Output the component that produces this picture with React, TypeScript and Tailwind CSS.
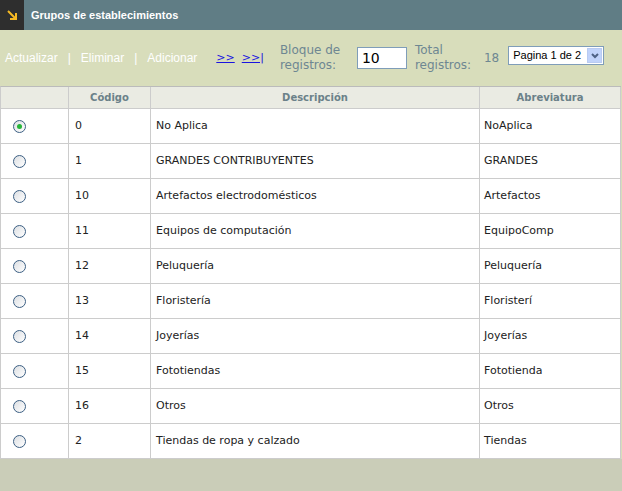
import React from "react";

type Row = { codigo: string; descripcion: string; abrev: string };

const rows: Row[] = [
  { codigo: "0", descripcion: "No Aplica", abrev: "NoAplica" },
  { codigo: "1", descripcion: "GRANDES CONTRIBUYENTES", abrev: "GRANDES" },
  { codigo: "10", descripcion: "Artefactos electrodomésticos", abrev: "Artefactos" },
  { codigo: "11", descripcion: "Equipos de computación", abrev: "EquipoComp" },
  { codigo: "12", descripcion: "Peluquería", abrev: "Peluquería" },
  { codigo: "13", descripcion: "Floristería", abrev: "Floristerí" },
  { codigo: "14", descripcion: "Joyerías", abrev: "Joyerías" },
  { codigo: "15", descripcion: "Fototiendas", abrev: "Fototienda" },
  { codigo: "16", descripcion: "Otros", abrev: "Otros" },
  { codigo: "2", descripcion: "Tiendas de ropa y calzado", abrev: "Tiendas" },
];

function Radio({ checked }: { checked?: boolean }) {
  return (
    <span className="w-[13px] h-[13px] rounded-full border border-[#3c5f83] bg-gradient-to-br from-[#dcdfe3] to-white flex items-center justify-center">
      {checked && <span className="w-[5px] h-[5px] rounded-full bg-[#26b53a]" />}
    </span>
  );
}

export default function App() {
  const cell = "border-r border-[#cccccc] px-[6px] flex items-center";
  return (
    <div className="w-[622px] h-[491px] bg-[#d8ddbb] flex flex-col text-[11px]" style={{ fontFamily: "'DejaVu Sans', Verdana, sans-serif" }}>
      <div className="h-[30px] bg-[#607d85] flex items-center shrink-0">
        <div className="w-[24px] h-[30px] bg-[#2e2e2e] flex items-center justify-center">
          <svg width="12" height="12" viewBox="0 0 12 12">
            <path d="M2 2 L9 9 M4 10 H10 V4" stroke="#f5b923" strokeWidth="2" fill="none" />
          </svg>
        </div>
        <span className="ml-[7px] text-white font-bold text-[11px] font-['Liberation_Sans',Arial,sans-serif]">Grupos de establecimientos</span>
      </div>

      <div className="h-[56px] flex items-center shrink-0 text-[11px]">
        <div className="flex items-center text-white ml-[5px] text-[12px] font-['Liberation_Sans',Arial,sans-serif]">
          <span>Actualizar</span>
          <span className="mx-[10px]">|</span>
          <span>Eliminar</span>
          <span className="mx-[10px]">|</span>
          <span>Adicionar</span>
        </div>
        <div className="ml-[19px] flex gap-[7px] text-[#1a14e0] underline">
          <span>&gt;&gt;</span>
          <span>&gt;&gt;|</span>
        </div>
        <div className="ml-[16px] text-[#6e8792] text-[12px] leading-[15px] w-[70px]">Bloque de registros:</div>
        <div className="ml-[7px] w-[50px] h-[22px] bg-white border border-[#7f9db9] text-[14px] px-[4px] flex items-center text-black">10</div>
        <div className="ml-[8px] text-[#6e8792] text-[12px] leading-[15px] w-[60px]">Total registros:</div>
        <div className="ml-[9px] text-[#6e8792] text-[12px]">18</div>
        <div className="ml-[9px] w-[96px] h-[19px] bg-white border border-[#7f9db9] flex items-center justify-between pl-[4px] pr-[1px] -mt-[5px]">
          <span className="text-[11px] text-black whitespace-nowrap font-['Liberation_Sans',Arial,sans-serif]">Pagina 1 de 2</span>
          <span className="w-[15px] h-[15px] bg-[#c1d3fb] border border-[#b9cbf2] flex items-center justify-center">
            <svg width="8" height="6" viewBox="0 0 8 6">
              <path d="M1 1 L4 4 L7 1" stroke="#4d6185" strokeWidth="2" fill="none" />
            </svg>
          </span>
        </div>
      </div>

      <div className="w-[621px] border-t border-l border-[#cccccc] border-t-[#bbbbbb] bg-white">
        <div className="h-[22px] bg-[#eaebe3] flex border-b border-[#cccccc] text-[#6b8189] font-bold text-[10px]">
          <div className={`${cell} w-[68px]`} />
          <div className={`${cell} w-[82px] justify-center`}>Código</div>
          <div className={`${cell} w-[329px] justify-center`}>Descripción</div>
          <div className={`${cell} w-[141px] justify-center`}>Abreviatura</div>
        </div>
        {rows.map((r, i) => (
          <div key={r.codigo} className="h-[35px] flex border-b border-[#cccccc] text-[#222222]">
            <div className={`${cell} w-[68px] pl-[12px]`}>
              <Radio checked={i === 0} />
            </div>
            <div className={`${cell} w-[82px]`}>{r.codigo}</div>
            <div className={`${cell} w-[329px] pl-[5px]`}>{r.descripcion}</div>
            <div className={`${cell} w-[141px] pl-[4px]`}>{r.abrev}</div>
          </div>
        ))}
      </div>
      <div className="flex-1 bg-[#cacdb8]" />
    </div>
  );
}
